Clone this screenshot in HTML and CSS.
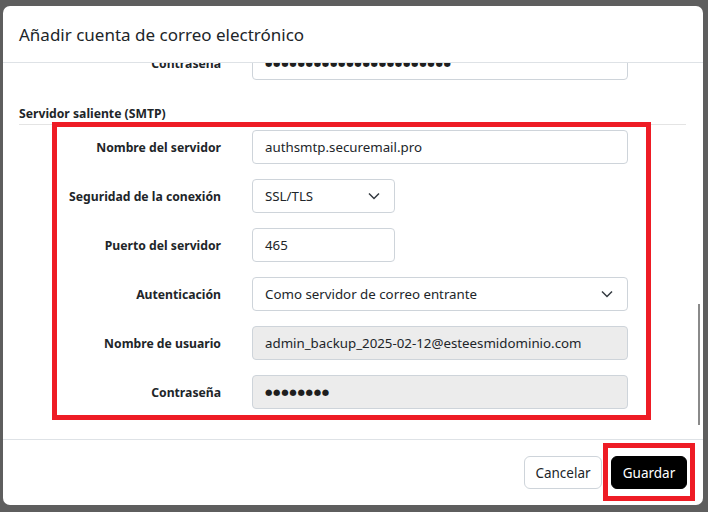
FILE: index.html
```html
<!DOCTYPE html>
<html lang="es">
<head>
<meta charset="utf-8">
<title>Añadir cuenta de correo electrónico</title>
<link rel="stylesheet" href="styles.css">
</head>
<body>
<div class="backdrop">
  <div class="modal">
    <header class="modal-header">
      <h1 class="modal-title">Añadir cuenta de correo electrónico</h1>
    </header>
    <div class="modal-body">
      <div class="scroll-content">
        <div class="form-row">
          <label class="form-label">Contraseña</label>
          <div class="field field-full"><span class="dots">●●●●●●●●●●●●●●●●●●●●●●●</span></div>
        </div>
        <h2 class="section-title">Servidor saliente (SMTP)</h2>
        <div class="form-grid">
          <div class="form-row">
            <label class="form-label">Nombre del servidor</label>
            <div class="field field-full">authsmtp.securemail.pro</div>
          </div>
          <div class="form-row">
            <label class="form-label">Seguridad de la conexión</label>
            <div class="field field-short field-select">
              <span>SSL/TLS</span>
              <svg class="chevron" viewBox="0 0 12 8" width="12" height="8"><path d="M1 1.5 L6 6.5 L11 1.5" fill="none" stroke="#343a40" stroke-width="1.5"/></svg>
            </div>
          </div>
          <div class="form-row">
            <label class="form-label">Puerto del servidor</label>
            <div class="field field-short">465</div>
          </div>
          <div class="form-row">
            <label class="form-label">Autenticación</label>
            <div class="field field-full field-select">
              <span>Como servidor de correo entrante</span>
              <svg class="chevron" viewBox="0 0 12 8" width="12" height="8"><path d="M1 1.5 L6 6.5 L11 1.5" fill="none" stroke="#343a40" stroke-width="1.5"/></svg>
            </div>
          </div>
          <div class="form-row">
            <label class="form-label">Nombre de usuario</label>
            <div class="field field-full field-disabled">admin_backup_2025-02-12@esteesmidominio.com</div>
          </div>
          <div class="form-row">
            <label class="form-label">Contraseña</label>
            <div class="field field-full field-disabled"><span class="dots">●●●●●●●●</span></div>
          </div>
        </div>
      </div>
      <div class="scrollbar"></div>
    </div>
    <footer class="modal-footer">
      <button class="btn btn-secondary">Cancelar</button>
      <button class="btn btn-primary">Guardar</button>
    </footer>
    <div class="annot annot-smtp"></div>
    <div class="annot annot-save"></div>
  </div>
</div>
</body>
</html>
```
FILE: styles.css
```css
* { box-sizing: border-box; }
html, body { margin: 0; padding: 0; }
body {
  width: 708px;
  height: 512px;
  overflow: hidden;
  background: #5e5e5e;
  font-family: "Noto Sans", "Open Sans", sans-serif;
  color: #212529;
}
.backdrop {
  padding: 6px 5px 0 3px;
}
.modal {
  position: relative;
  width: 700px;
  height: 499px;
  background: #fff;
  border-radius: 7px;
  display: flex;
  flex-direction: column;
}
.modal-header {
  height: 57px;
  border-bottom: 1px solid #dee2e6;
  display: flex;
  align-items: center;
  padding: 0 16px;
}
.modal-title {
  margin: 0;
  font-size: 17px;
  font-weight: 400;
  color: #212529;
}
.modal-body {
  position: relative;
  height: 376px;
  overflow: hidden;
  padding: 0 17px 0 16px;
}
.scroll-content {
  margin-top: -17px;
}
.form-row {
  display: grid;
  grid-template-columns: 202px 1fr;
  column-gap: 31px;
  align-items: center;
  height: 34px;
}
.form-label {
  text-align: right;
  font-weight: 700;
  font-size: 12.2px;
  color: #212529;
}
.field {
  height: 34px;
  border: 1px solid #ced4da;
  border-radius: 4px;
  padding: 0 12px;
  display: flex;
  align-items: center;
  font-size: 13.3px;
  color: #212529;
  background: #fff;
}
.field-full { width: 376px; }
.field-short { width: 143px; }
.field-select { justify-content: space-between; padding-right: 14px; }
.field-disabled { background: #ececec; }
.dots {
  font-family: "DejaVu Sans", sans-serif;
  font-size: 8.5px;
  letter-spacing: 0.7px;
  color: #1e1e1e;
}
.section-title {
  margin: 25px 0 0;
  font-size: 12.2px;
  font-weight: 700;
  line-height: 18px;
  padding-bottom: 1px;
  border-bottom: 1px solid #e4e4e4;
  color: #212529;
}
.form-grid {
  margin-top: 5px;
  display: flex;
  flex-direction: column;
  gap: 15px;
}
.scrollbar {
  position: absolute;
  right: 3px;
  top: 241px;
  width: 2px;
  height: 121px;
  background: #8a8a8a;
}
.modal-footer {
  flex: 1;
  border-top: 1px solid #dee2e6;
  display: flex;
  justify-content: flex-end;
  align-items: center;
  gap: 9px;
  padding: 0 16px;
}
.btn {
  height: 33px;
  border-radius: 6px;
  font-family: inherit;
  font-size: 13.5px;
  padding: 0 10px;
}
.btn-secondary {
  background: #fff;
  border: 1px solid #ced4da;
  color: #212529;
  width: 78px;
}
.btn-primary {
  background: #000;
  border: 1px solid #000;
  color: #fff;
  width: 76px;
}
.annot {
  position: absolute;
  border: 5px solid #ee1c25;
  pointer-events: none;
}
.annot-smtp {
  left: 49px;
  top: 116px;
  width: 599px;
  height: 298px;
}
.annot-save {
  left: 600px;
  top: 437px;
  width: 92px;
  height: 58px;
}
```
